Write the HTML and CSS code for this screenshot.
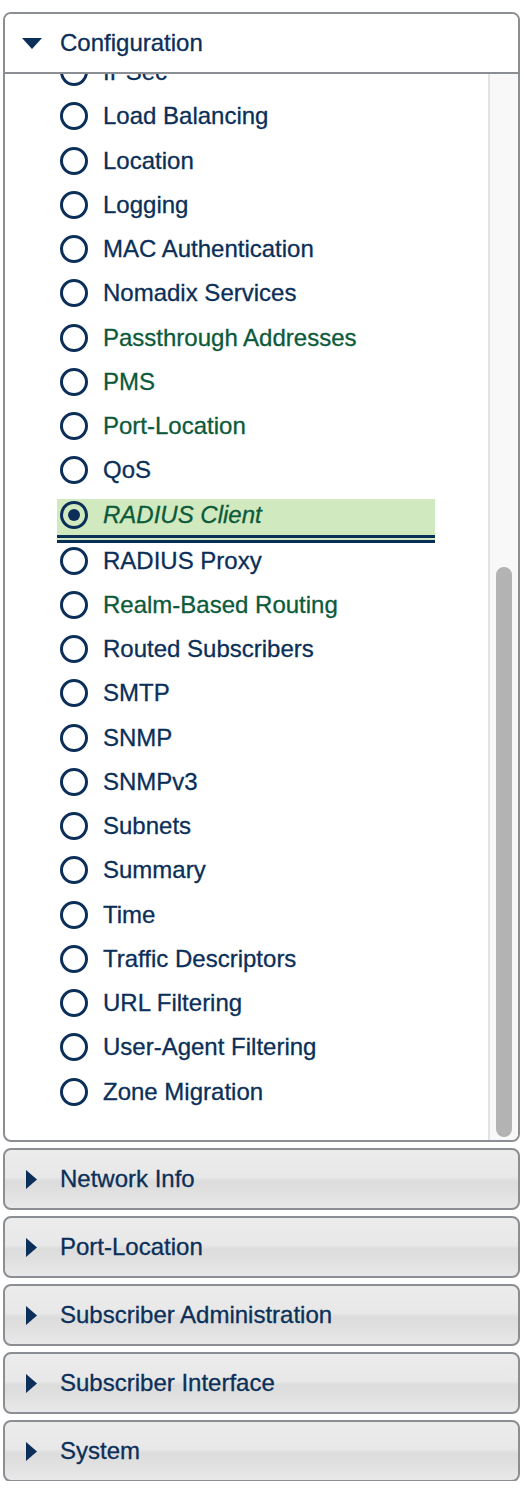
FILE: index.html
```html
<!DOCTYPE html>
<html>
<head>
<meta charset="utf-8">
<link rel="stylesheet" href="styles.css">
</head>
<body>
<div class="frame">
  <section class="panel open">
    <div class="panel-head">
      <svg class="tri-down" viewBox="0 0 20 11"><polygon points="0,0 20,0 10,11"/></svg>
      <span class="title">Configuration</span>
    </div>
    <div class="panel-body">
      <ul class="list">
        <li class="item"><span class="radio"></span><span class="label">IPSec</span></li>
        <li class="item"><span class="radio"></span><span class="label">Load Balancing</span></li>
        <li class="item"><span class="radio"></span><span class="label">Location</span></li>
        <li class="item"><span class="radio"></span><span class="label">Logging</span></li>
        <li class="item"><span class="radio"></span><span class="label">MAC Authentication</span></li>
        <li class="item"><span class="radio"></span><span class="label">Nomadix Services</span></li>
        <li class="item green"><span class="radio"></span><span class="label">Passthrough Addresses</span></li>
        <li class="item green"><span class="radio"></span><span class="label">PMS</span></li>
        <li class="item green"><span class="radio"></span><span class="label">Port-Location</span></li>
        <li class="item"><span class="radio"></span><span class="label">QoS</span></li>
        <li class="item green selected"><span class="radio checked"></span><span class="label">RADIUS Client</span></li>
        <li class="item"><span class="radio"></span><span class="label">RADIUS Proxy</span></li>
        <li class="item green"><span class="radio"></span><span class="label">Realm-Based Routing</span></li>
        <li class="item"><span class="radio"></span><span class="label">Routed Subscribers</span></li>
        <li class="item"><span class="radio"></span><span class="label">SMTP</span></li>
        <li class="item"><span class="radio"></span><span class="label">SNMP</span></li>
        <li class="item"><span class="radio"></span><span class="label">SNMPv3</span></li>
        <li class="item"><span class="radio"></span><span class="label">Subnets</span></li>
        <li class="item"><span class="radio"></span><span class="label">Summary</span></li>
        <li class="item"><span class="radio"></span><span class="label">Time</span></li>
        <li class="item"><span class="radio"></span><span class="label">Traffic Descriptors</span></li>
        <li class="item"><span class="radio"></span><span class="label">URL Filtering</span></li>
        <li class="item"><span class="radio"></span><span class="label">User-Agent Filtering</span></li>
        <li class="item"><span class="radio"></span><span class="label">Zone Migration</span></li>
      </ul>
      <div class="scroll-track"><div class="scroll-thumb"></div></div>
    </div>
  </section>

  <section class="panel closed">
    <div class="panel-head">
      <svg class="tri-right" viewBox="0 0 11 19"><polygon points="0,0 11,9.5 0,19"/></svg>
      <span class="title">Network Info</span>
    </div>
  </section>
  <section class="panel closed">
    <div class="panel-head">
      <svg class="tri-right" viewBox="0 0 11 19"><polygon points="0,0 11,9.5 0,19"/></svg>
      <span class="title">Port-Location</span>
    </div>
  </section>
  <section class="panel closed">
    <div class="panel-head">
      <svg class="tri-right" viewBox="0 0 11 19"><polygon points="0,0 11,9.5 0,19"/></svg>
      <span class="title">Subscriber Administration</span>
    </div>
  </section>
  <section class="panel closed">
    <div class="panel-head">
      <svg class="tri-right" viewBox="0 0 11 19"><polygon points="0,0 11,9.5 0,19"/></svg>
      <span class="title">Subscriber Interface</span>
    </div>
  </section>
  <section class="panel closed">
    <div class="panel-head">
      <svg class="tri-right" viewBox="0 0 11 19"><polygon points="0,0 11,9.5 0,19"/></svg>
      <span class="title">System</span>
    </div>
  </section>
</div>
</body>
</html>
```

FILE: styles.css
```css
html, body {
  margin: 0;
  padding: 0;
  background: #ffffff;
}

body {
  font-family: "Liberation Sans", Arial, Helvetica, sans-serif;
  font-size: 24px;
  color: #0b2f58;
  -webkit-text-stroke: 0.3px currentColor;
}

.frame {
  box-sizing: border-box;
  width: 520px;
  height: 1481px;
  padding: 12px 0 0 3px;
  overflow: hidden;
}

.panel {
  box-sizing: border-box;
  width: 517px;
  border: 2px solid #8b8e92;
  border-radius: 8px;
}

.panel.open {
  height: 1130px;
  background: #ffffff;
  display: flex;
  flex-direction: column;
  overflow: hidden;
}

.panel.closed {
  height: 62px;
  margin-top: 6px;
  background: linear-gradient(to bottom, #ececec 0%, #e8e8e8 46%, #dcdcdc 54%, #e0e0e0 72%, #e8e8e8 100%);
}

.panel-head {
  display: flex;
  align-items: center;
  box-sizing: border-box;
}

.panel.open .panel-head {
  height: 60px;
  flex: none;
  padding-left: 17px;
  border-bottom: 2px solid #8b8e92;
  background: #ffffff;
}

.panel.closed .panel-head {
  height: 58px;
  padding-left: 21px;
}

.tri-down {
  width: 20px;
  height: 11px;
  fill: #0b2f58;
  margin-right: 18px;
  flex: none;
}

.tri-right {
  width: 11px;
  height: 19px;
  fill: #0b2f58;
  margin-right: 23px;
  flex: none;
}

.title {
  color: #0b2f58;
}

.panel-body {
  display: flex;
  height: 1066px;
  overflow: hidden;
}

.list {
  flex: 1;
  list-style: none;
  margin: -17.5px 0 0 0;
  padding: 0 0 0 52px;
}

.item {
  box-sizing: border-box;
  width: 378px;
  height: 44px;
  padding: 0 0 5px 3px;
  border-bottom: 8px solid transparent;
  margin-bottom: 0.25px;
  display: flex;
  align-items: center;
  color: #0b2f58;
  white-space: nowrap;
}

.item.green {
  color: #0c5a3b;
}

.item.selected {
  background: #d1e9bf;
  border-bottom: 8px double #0a2f57;
  margin-bottom: 2px;
}

.item.selected .label {
  font-style: italic;
}

.radio {
  box-sizing: border-box;
  width: 28px;
  height: 28px;
  border: 3px solid #0b2f58;
  border-radius: 50%;
  margin-right: 15px;
  flex: none;
  display: flex;
  align-items: center;
  justify-content: center;
}

.radio.checked::after {
  content: "";
  width: 12px;
  height: 12px;
  border-radius: 50%;
  background: #0b2f58;
}

.scroll-track {
  box-sizing: border-box;
  width: 30px;
  flex: none;
  background: #f8f8f8;
  border-left: 2px solid #e2e2e2;
  padding-left: 6px;
}

.scroll-thumb {
  width: 16px;
  height: 570px;
  margin-top: 493px;
  border-radius: 8px;
  background: #b3b3b3;
}
```
